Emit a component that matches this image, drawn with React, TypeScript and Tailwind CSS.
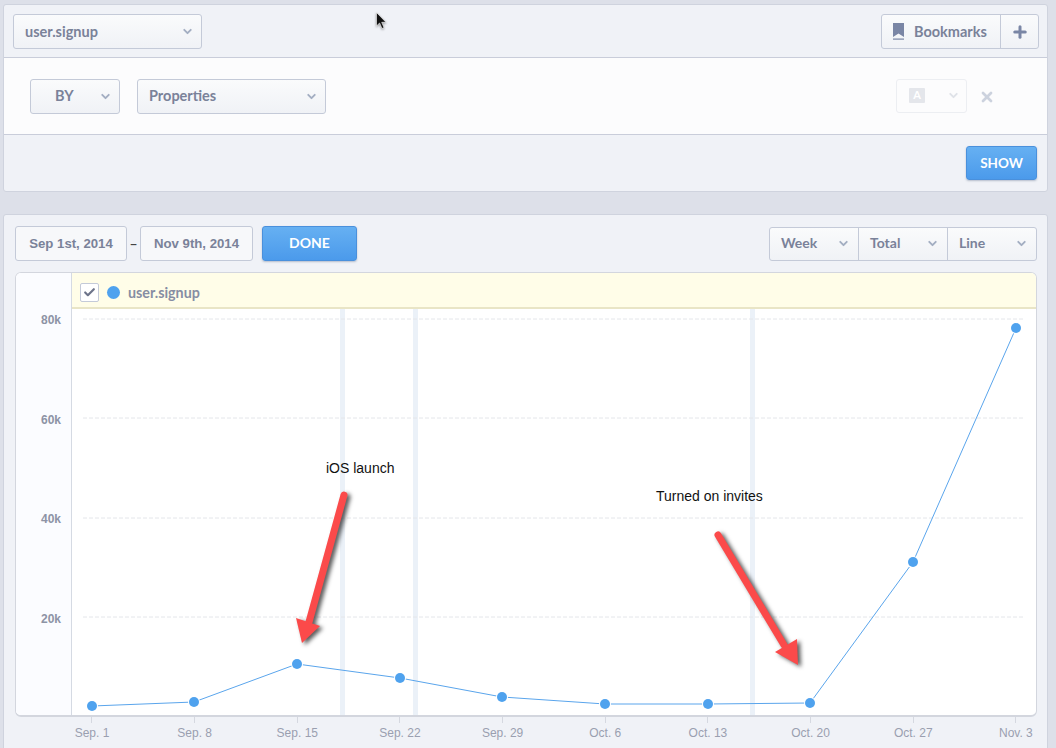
import { Check, ChevronDown, Plus, X } from 'lucide-react';

const xLabels = ['Sep. 1', 'Sep. 8', 'Sep. 15', 'Sep. 22', 'Sep. 29', 'Oct. 6', 'Oct. 13', 'Oct. 20', 'Oct. 27', 'Nov. 3'];
const yLabels = ['80k', '60k', '40k', '20k'];
const gridY = [319, 418, 518, 617];
const bands = [340, 413, 750];
const points = [
  [92, 706], [194, 702], [297, 664], [400, 678], [502, 697],
  [605, 704], [708, 704], [810, 703], [913, 562], [1016, 328],
];

function Chevron({ className = 'text-[#a3aec2]' }: { className?: string }) {
  return <ChevronDown size={13} strokeWidth={3.5} className={className} />;
}

function BookmarkIcon() {
  return (
    <svg viewBox="0 0 11 17" className="h-[17px] w-[11px] shrink-0">
      <path d="M0 0 H11 V14 L5.5 10.5 L0 14 Z" fill="#7a86a5" />
      <rect x={0} y={15.5} width={11} height={1.2} fill="#7a86a5" />
    </svg>
  );
}

function Select({ label, className, labelClass = '' }: { label: string; className: string; labelClass?: string }) {
  return (
    <div className={`flex h-[35px] items-center justify-between rounded-[3px] border border-[#c4cad8] bg-gradient-to-b from-[#fafbfc] to-[#f0f2f6] text-[14.5px] font-bold text-[#7a8299] ${className}`}>
      <span className={labelClass}>{label}</span>
      <Chevron />
    </div>
  );
}

function Blue({ label, className }: { label: string; className: string }) {
  return (
    <div className={`flex items-center justify-center rounded-[3px] border border-[#4a90dc] bg-gradient-to-b from-[#66b0f2] to-[#4b9aeb] font-bold text-white shadow-[0_1px_2px_rgba(70,90,120,0.35)] ${className}`}>
      {label}
    </div>
  );
}

function Segment({ label, last }: { label: string; last?: boolean }) {
  return (
    <div className={`flex flex-1 items-center justify-between pl-[11px] pr-[8px] ${last ? '' : 'border-r border-[#c4cad8]'}`}>
      <span className="-mt-[2px]">{label}</span>
      <Chevron />
    </div>
  );
}

function Chart() {
  return (
    <svg viewBox="72 309 964 407" className="block h-[407px] w-[964px]">
      {bands.map((x) => (
        <rect key={x} x={x} y={309} width={5} height={407} fill="#ebf1f8" />
      ))}
      {gridY.map((y) => (
        <line key={y} x1={83} x2={1025} y1={y} y2={y} stroke="#e4e6ea" strokeDasharray="4 2" />
      ))}
      <polyline points={points.map((p) => p.join(',')).join(' ')} fill="none" stroke="#5aa5ec" strokeWidth={1} />
      {points.map(([x, y]) => (
        <circle key={x} cx={x} cy={y} r={6} fill="#fff" />
      ))}
      {points.map(([x, y]) => (
        <circle key={x} cx={x} cy={y} r={5} fill="#4fa2ee" />
      ))}
      <g className="[filter:drop-shadow(3px_2px_2px_rgba(0,0,0,0.65))]">
        <line x1={344} y1={495} x2={309} y2={622} stroke="#fb4a4a" strokeWidth={7} strokeLinecap="round" />
        <polygon points="296,618 320,626 302,643" fill="#fb4a4a" />
        <line x1={718} y1={535} x2={784} y2={645} stroke="#fb4a4a" strokeWidth={7} strokeLinecap="round" />
        <polygon points="775,652 797,639 798,665" fill="#fb4a4a" />
      </g>
      <text x={326} y={473} fontSize={14} fill="#111" fontFamily="'Liberation Sans', sans-serif">iOS launch</text>
      <text x={656} y={501} fontSize={14} fill="#111" fontFamily="'Liberation Sans', sans-serif">Turned on invites</text>
    </svg>
  );
}

export default function App() {
  return (
    <div className="h-[748px] w-[1056px] overflow-hidden bg-[#dde0e9] pl-[3px] pr-[8px] pt-[4px] font-['Lato',sans-serif]">
      <section className="h-[188px] overflow-hidden rounded-[3px] border border-[#cfd3de] bg-[#f0f2f7]">
        <div className="flex h-[53px] items-start justify-between border-b border-[#c9cdda] pl-[9px] pr-[8px] pt-[9px]">
          <Select label="user.signup" className="w-[189px] pl-[11px] pr-[7px]" />
          <div className="flex h-[35px] w-[158px] rounded-[3px] border border-[#c4cad8] bg-gradient-to-b from-[#fafbfc] to-[#f0f2f6] text-[14.5px] font-bold text-[#7a8299]">
            <div className="flex w-[119px] items-center gap-[10px] border-r border-[#c4cad8] pl-[11px]">
              <BookmarkIcon />
              <span>Bookmarks</span>
            </div>
            <div className="flex flex-1 items-center justify-center">
              <Plus size={18} strokeWidth={4} className="text-[#7a86a5]" />
            </div>
          </div>
        </div>
        <div className="flex h-[77px] items-center border-b border-[#c9cdda] bg-[#fcfcfd] pl-[26px] pr-[52px] pt-[1px]">
          <Select label="BY" className="w-[90px] pl-[24px] pr-[7px]" labelClass="-mt-[2px]" />
          <Select label="Properties" className="ml-[17px] w-[189px] pl-[11px] pr-[7px]" labelClass="-mt-[2px]" />
          <div className="mb-[2px] ml-auto flex h-[34px] w-[71px] items-center justify-between rounded-[3px] border border-[#eceef2] pl-[12px] pr-[6px]">
            <span className="flex h-[15px] w-[16px] items-center justify-center rounded-[1px] bg-[#e4e6eb] text-[11px] font-bold text-white">A</span>
            <Chevron className="text-[#dfe2e8]" />
          </div>
          <X size={16} strokeWidth={4} className="ml-[12px] text-[#ccd2de]" />
        </div>
        <div className="flex justify-end pr-[10px] pt-[11px]">
          <Blue label="SHOW" className="h-[34px] w-[71px] text-[13.5px]" />
        </div>
      </section>

      <section className="mt-[22px] h-[560px] rounded-[3px] border border-[#cfd3de] bg-[#f0f2f7] pl-[11px] pr-[10px] pt-[11px]">
        <div className="flex h-[35px] items-center text-[14px] font-bold text-[#7a8299]">
          <div className="flex h-[35px] w-[112px] items-center justify-center rounded-[3px] border border-[#c4cad8] bg-[#f7f8fa] font-['Liberation_Sans',sans-serif] text-[13.2px]">Sep 1st, 2014</div>
          <span className="w-[13px] text-center text-[#444]">–</span>
          <div className="flex h-[35px] w-[113px] items-center justify-center rounded-[3px] border border-[#c4cad8] bg-[#f7f8fa] font-['Liberation_Sans',sans-serif] text-[13.2px]">Nov 9th, 2014</div>
          <Blue label="DONE" className="ml-[9px] h-[35px] w-[95px] pb-[2px] text-[14px]" />
          <div className="ml-auto flex h-[34px] w-[268px] rounded-[3px] border border-[#c4cad8] bg-gradient-to-b from-[#fafbfc] to-[#f0f2f6]">
            <Segment label="Week" />
            <Segment label="Total" />
            <Segment label="Line" last />
          </div>
        </div>

        <div className="mt-[11px] flex h-[445px] w-[1022px] overflow-hidden rounded-[6px] border border-b-2 border-[#d3d6de] bg-white">
          <div className="w-[56px] shrink-0 border-r border-[#d5dae3] bg-[#fbfcff] pt-[38px] text-right font-['Liberation_Sans',sans-serif] text-[12px] font-bold text-[#8d93a5]">
            {yLabels.map((label) => (
              <div key={label} className="flex h-[99.5px] items-start justify-end pr-[10px]">{label}</div>
            ))}
          </div>
          <div className="flex-1">
            <div className="flex h-[36px] items-center border-b-2 border-[#e9e5c6] bg-[#fffde8] pl-[8px] pt-[4px]">
              <span className="flex h-[19px] w-[19px] items-center justify-center rounded-[2px] border border-[#c4cad8] bg-white">
                <Check size={13} strokeWidth={4} className="text-[#6d7489]" />
              </span>
              <span className="ml-[8px] h-[13px] w-[13px] rounded-full bg-[#4fa2ee]" />
              <span className="ml-[8px] mt-[2px] text-[14.3px] font-bold text-[#868da3]">user.signup</span>
            </div>
            <Chart />
          </div>
        </div>

        <div className="flex pl-[25.67px] font-['Liberation_Sans',sans-serif] text-[12px] text-[#9a9fb0]">
          {xLabels.map((label) => (
            <div key={label} className="flex w-[102.67px] shrink-0 flex-col items-center">
              <span className="h-[6px] w-px bg-[#d5d8e0]" />
              <span className="mt-px">{label}</span>
            </div>
          ))}
        </div>
      </section>

      {/* mouse cursor caught in the screenshot */}
      <svg viewBox="0 0 12 20" className="absolute left-[376px] top-[12px] h-[20px] w-[12px] [filter:drop-shadow(0_1px_1px_rgba(0,0,0,0.4))]">
        <path d="M0.5 0.5 L0.5 14 L3.6 11 L6 16.5 L8 15.6 L5.7 10.3 L10 10.3 Z" fill="#111" stroke="#fff" strokeWidth={0.6} />
      </svg>
    </div>
  );
}
